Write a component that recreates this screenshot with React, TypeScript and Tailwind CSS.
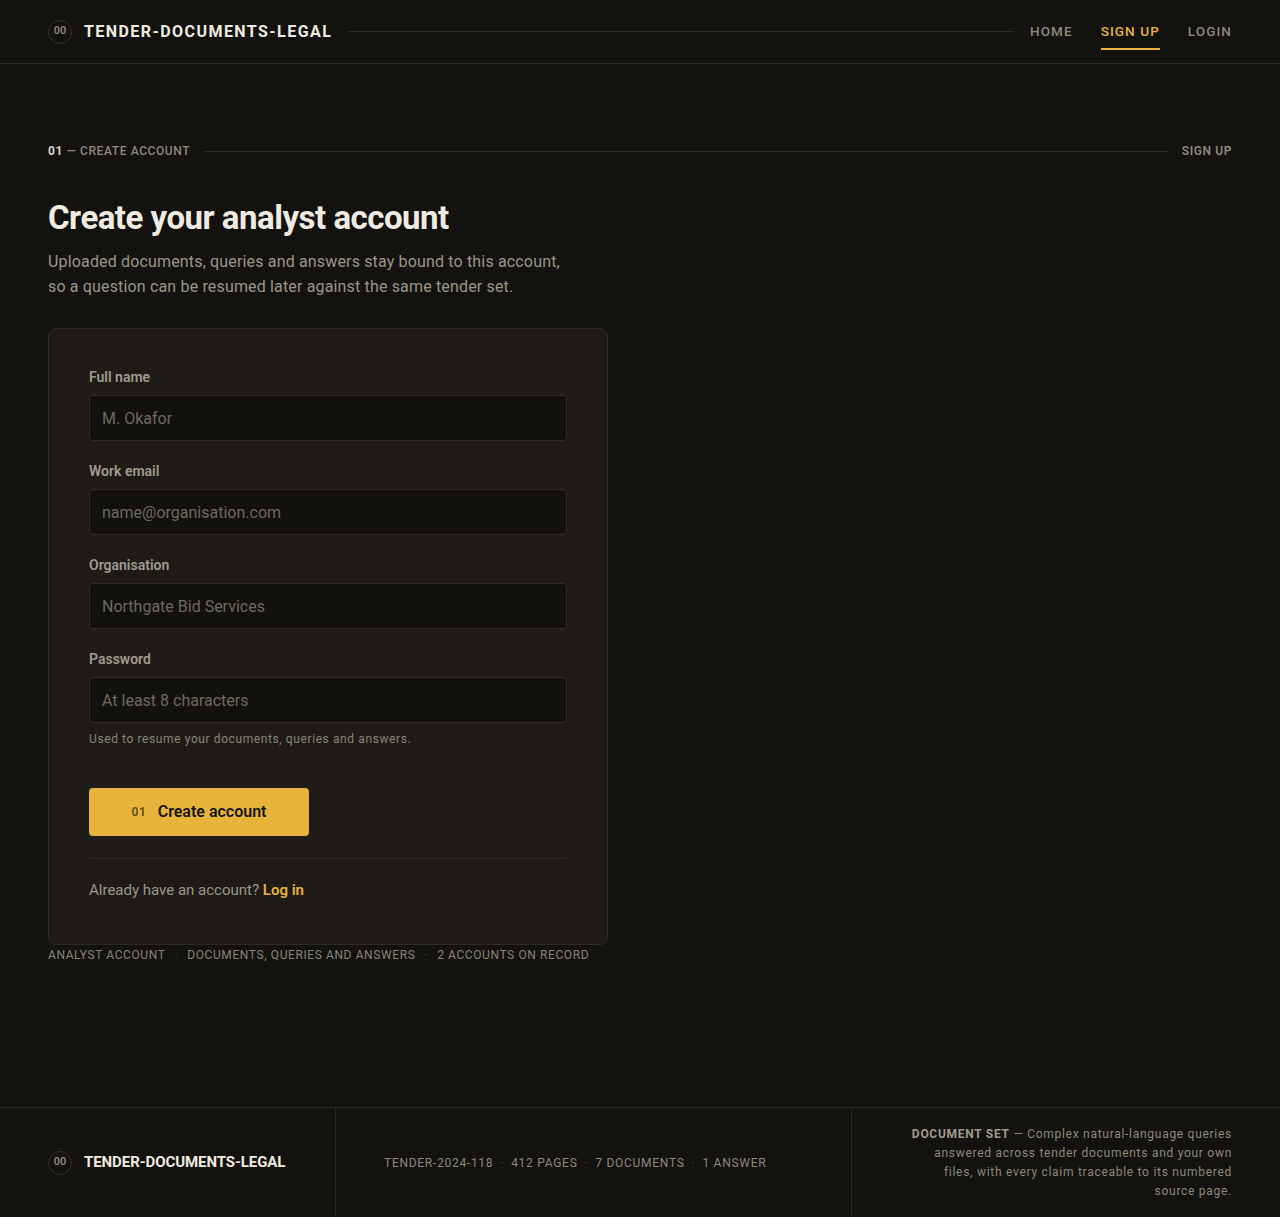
import React from 'react';

const font = { fontFamily: 'Roboto, "Noto Sans", sans-serif' };

const Mark = () => (
  <span className="flex h-6 w-6 items-center justify-center rounded-full border border-[#34302a] text-[11px] font-semibold text-[#8f887c]">
    00
  </span>
);

const Field = ({ label, placeholder, type = 'text', help }: { label: string; placeholder: string; type?: string; help?: string }) => (
  <div className="flex flex-col">
    <label className="text-[14px] leading-5 font-semibold text-[#a19a8d]">{label}</label>
    <input
      type={type}
      placeholder={placeholder}
      className="mt-2 h-[46px] w-full rounded-[4px] border border-[#2e2b26] bg-[#12110e] px-[12px] text-[16px] text-[#e9e3d8] placeholder:text-[#6f695f] outline-none"
    />
    {help && <p className="mt-2 text-[12px] leading-4 tracking-[0.05em] text-[#8a8478]">{help}</p>}
  </div>
);

const Dot = () => <span className="text-[#4a453d]">·</span>;

export default function App() {
  return (
    <div className="min-h-screen flex flex-col bg-[#13120f] text-[#f0ebe1]" style={font}>
      {/* top bar */}
      <header className="h-16 border-b border-[#2a2722] flex items-center px-12">
        <Mark />
        <span className="ml-3 text-[16px] font-bold tracking-[0.09em] text-[#f0ebe1]">TENDER-DOCUMENTS-LEGAL</span>
        <div className="mx-4 h-px flex-1 bg-[#2e2b25]" />
        <nav className="flex items-center gap-7 text-[13.5px] font-medium tracking-[0.08em] text-[#8f887c]">
          <a className="py-[6px]">HOME</a>
          <a className="relative py-[6px] text-[#e8b33b]">
            SIGN UP
            <span className="absolute left-0 right-0 -bottom-[2px] h-[2px] bg-[#e8b33b]" />
          </a>
          <a className="py-[6px]">LOGIN</a>
        </nav>
      </header>

      <main className="flex-1 px-12 pt-[78px]">
        <div className="flex items-center gap-[14px] text-[12px] tracking-[0.05em] font-medium">
          <span>
            <span className="font-bold text-[#d9d2c5]">01</span>
            <span className="text-[#8f887c]"> — CREATE ACCOUNT</span>
          </span>
          <div className="h-px flex-1 bg-[#2e2b25]" />
          <span className="font-semibold text-[#8f887c]">SIGN UP</span>
        </div>

        <h1 className="mt-[36px] text-[33px] leading-[44px] font-bold tracking-[-0.015em] text-[#f0ebe1]">
          Create your analyst account
        </h1>
        <p className="mt-[9px] max-w-[525px] text-[16px] leading-[25px] tracking-[0.01em] text-[#9c9588]">
          Uploaded documents, queries and answers stay bound to this account, so a question can be resumed later against the same tender set.
        </p>

        <div className="mt-[29px] w-[560px] rounded-lg border border-[#2d2a25] bg-[#1e1b17] px-10 pt-[38px] pb-[44px]">
          <div className="flex flex-col gap-5">
            <Field label="Full name" placeholder="M. Okafor" />
            <Field label="Work email" placeholder="name@organisation.com" type="email" />
            <Field label="Organisation" placeholder="Northgate Bid Services" />
            <Field
              label="Password"
              placeholder="At least 8 characters"
              type="password"
              help="Used to resume your documents, queries and answers."
            />
          </div>

          <button className="mt-[41px] flex h-12 w-[220px] items-center justify-center gap-[11px] rounded-[4px] bg-[#e8b33b] text-[#17140f]">
            <span className="text-[12px] font-semibold tracking-[0.06em] text-[#5e4a1d]">01</span>
            <span className="text-[16px] font-semibold">Create account</span>
          </button>

          <div className="mt-[22px] h-px bg-[#2e2b25]" />

          <p className="mt-[21px] text-[15px] leading-5 text-[#9c9588]">
            Already have an account? <a className="font-semibold text-[#e8b33b]">Log in</a>
          </p>
        </div>

        <div className="mt-[1px] flex items-center gap-[9px] text-[12px] tracking-[0.05em] text-[#8a8478]">
          <span>ANALYST ACCOUNT</span>
          <Dot />
          <span>DOCUMENTS, QUERIES AND ANSWERS</span>
          <Dot />
          <span>2 ACCOUNTS ON RECORD</span>
        </div>
      </main>

      <footer className="mt-[140px] h-[110px] border-t border-[#2a2722] flex">
        <div className="w-[336px] border-r border-[#2a2722] flex items-center pl-12">
          <Mark />
          <span className="ml-3 text-[15px] font-bold tracking-[-0.005em] text-[#f0ebe1]">TENDER-DOCUMENTS-LEGAL</span>
        </div>
        <div className="flex-1 border-r border-[#2a2722] flex items-center pl-12 gap-[7px] text-[12px] tracking-[0.06em] text-[#8f887c]">
          <span>TENDER-2024-118</span>
          <Dot />
          <span>412 PAGES</span>
          <Dot />
          <span>7 DOCUMENTS</span>
          <Dot />
          <span>1 ANSWER</span>
        </div>
        <div className="w-[428px] flex items-center justify-end pr-12">
          <p className="text-right text-[12px] leading-[19px] tracking-[0.06em] text-[#8f887c]">
            <span className="font-bold text-[#a19a8d]">DOCUMENT SET</span> — Complex natural-language queries
            <br />
            answered across tender documents and your own
            <br />
            files, with every claim traceable to its numbered
            <br />
            source page.
          </p>
        </div>
      </footer>
    </div>
  );
}
